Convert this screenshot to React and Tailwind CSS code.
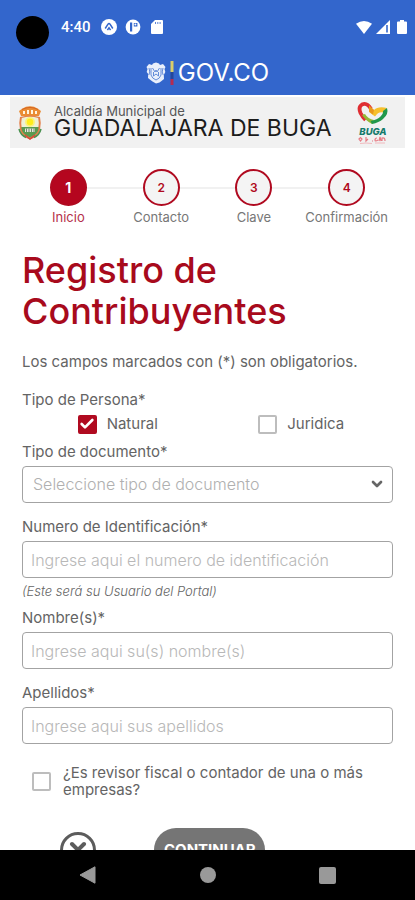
import { useState } from "react";
import { Check, ChevronDown, X } from "lucide-react";

const STEPS = ["Inicio", "Contacto", "Clave", "Confirmación"];

const DOCUMENT_TYPES = ["Cédula de ciudadanía", "Cédula de extranjería", "Pasaporte"];

/* ================= PAGE ================= */
export default function App() {
  const [persona, setPersona] = useState("natural");
  const [revisor, setRevisor] = useState(false);
  const [form, setForm] = useState({ tipo: "", numero: "", nombres: "", apellidos: "" });

  const update = (e) => setForm({ ...form, [e.target.name]: e.target.value });

  return (
    <div className="flex h-screen flex-col bg-white font-[Inter,sans-serif] text-[#646464]">
      <header className="bg-[#3366cc] text-white">
        <StatusBar />
        <div className="flex h-[41px] items-center justify-center gap-1 pb-1">
          <CoatOfArms />
          <FlagBar />
          <span className="text-2xl leading-6">GOV.CO</span>
        </div>
      </header>

      <main className="flex-1 overflow-y-auto [scrollbar-width:none]">
        <Banner />
        <Stepper current={0} />

        <form className="px-[22px]" onSubmit={(e) => e.preventDefault()}>
          <h1 className="mt-6 max-w-[300px] text-[36px] leading-[41px] font-medium text-[#a80a1c]">
            Registro de Contribuyentes
          </h1>
          <p className="mt-5 text-[15px] leading-5">
            Los campos marcados con (*) son obligatorios.
          </p>

          <fieldset className="mt-[18px]">
            <legend className="text-[15px] leading-5">Tipo de Persona*</legend>
            <div className="grid grid-cols-2 pt-1 pl-1">
              <CheckItem
                label="Natural"
                checked={persona === "natural"}
                onChange={() => setPersona("natural")}
              />
              <CheckItem
                label="Juridica"
                checked={persona === "juridica"}
                onChange={() => setPersona("juridica")}
              />
            </div>
          </fieldset>

          <div className="mt-2">
            <label htmlFor="tipo" className="block text-[15px] leading-5">
              Tipo de documento*
            </label>
            <div className="relative mt-1">
              <select
                id="tipo"
                name="tipo"
                value={form.tipo}
                onChange={update}
                className="h-[37px] w-full appearance-none rounded border border-[#a3a3a3] bg-white px-2.5 pb-0.5 text-base font-light text-[#b0b0b0]"
              >
                <option value="">Seleccione tipo de documento</option>
                {DOCUMENT_TYPES.map((type) => (
                  <option key={type}>{type}</option>
                ))}
              </select>
              <ChevronDown
                className="pointer-events-none absolute top-2.5 right-2 h-4 w-4 text-[#666]"
                strokeWidth={4}
              />
            </div>
          </div>

          <TextField
            name="numero"
            label="Numero de Identificación*"
            placeholder="Ingrese aqui el numero de identificación"
            value={form.numero}
            onChange={update}
          />
          <p className="mt-1 -mb-1.5 text-[13px] leading-[18px] font-light italic">
            (Este será su Usuario del Portal)
          </p>
          <TextField
            name="nombres"
            label="Nombre(s)*"
            placeholder="Ingrese aqui su(s) nombre(s)"
            value={form.nombres}
            onChange={update}
          />
          <TextField
            name="apellidos"
            label="Apellidos*"
            placeholder="Ingrese aqui sus apellidos"
            value={form.apellidos}
            onChange={update}
          />

          <label className="mt-5 flex items-center gap-3 px-2.5 text-[15px] leading-[17px]">
            <Checkbox checked={revisor} onChange={() => setRevisor(!revisor)} />
            ¿Es revisor fiscal o contador de una o más empresas?
          </label>

          <div className="mt-[30px] flex items-center gap-[58px] pb-6 pl-[38px]">
            <button
              type="button"
              aria-label="Cancelar"
              className="flex h-9 w-9 items-center justify-center rounded-full border-[3px] border-[#5c5c5c] text-[#5c5c5c]"
            >
              <X className="h-6 w-6" strokeWidth={4} />
            </button>
            <button
              type="submit"
              className="h-11 rounded-full bg-[#757575] px-2.5 text-[15px] font-bold text-white"
            >
              CONTINUAR
            </button>
          </div>
        </form>
      </main>

      <NavBar />
    </div>
  );
}

/* ================= STATUS BAR ================= */
function StatusBar() {
  return (
    <div className="flex h-[54px] items-center pr-2 pl-4">
      <span className="mt-2.5 h-[33px] w-[33px] rounded-full bg-black" />
      <span className="ml-3 font-[Roboto,sans-serif] text-[15px] font-medium">4:40</span>
      <svg viewBox="0 0 16 16" className="ml-2.5 h-4 w-4">
        <circle cx="8" cy="8" r="8" fill="#fff" />
        <path d="M4.2 9.5 7 5.2q1-1.4 2 0l2.8 4.3M6.4 11.2 8 8.8l1.6 2.4" fill="none" stroke="#3366cc" strokeWidth="1.5" />
      </svg>
      <svg viewBox="0 0 16 16" className="ml-2 h-4 w-4">
        <circle cx="8" cy="8" r="7.4" fill="#fff" />
        <path d="M5 3.400h2.200v9H5zM8.800 4h3.600v3.400H8.800z" fill="#3366cc" />
        <circle cx="10.400" cy="5.400" r="1" fill="#fff" />
      </svg>
      <svg viewBox="0 0 12 14" className="ml-2.5 h-3.5 w-3">
        <path d="M4 0h7q1 0 1 1v12q0 1-1 1H1q-1 0-1-1V4z" fill="#fff" />
        <path d="M4.500 2v2M6.800 2v2M9.100 2v2" stroke="#3366cc" strokeWidth=".8" />
      </svg>
      <svg viewBox="0 0 16 13" className="ml-auto h-[13px] w-4">
        <path d="M0 2.8Q8-2.8 16 2.8L8 13z" fill="#fff" />
      </svg>
      <svg viewBox="0 0 14 14" className="ml-1 h-3.5 w-3.5">
        <path d="M0 14 14 0v14z" fill="#fff" />
        <path d="M11 5v7.5" stroke="#3366cc" strokeWidth="1.6" />
      </svg>
      <svg viewBox="0 0 10 14" className="ml-[7px] h-3.5 w-2.5">
        <path d="M3 0h4v1.4h2q1 0 1 1V13q0 1-1 1H1q-1 0-1-1V2.4q0-1 1-1h2z" fill="#fff" />
      </svg>
    </div>
  );
}

/* ================= LOGOS ================= */
function CoatOfArms() {
  return (
    <svg viewBox="0 0 20 22" className="h-[22px] w-5">
      <path
        d="M7 1.5 10 .5l3 1 1 1.5 3-1 2.5 3-1 2 .8 3-1.500 3 .2 4-2.500 2-2 1.500L10 21.500 6.500 19.500l-2-1.500-2.500-2 .2-4L.7 10l.8-3-1-2L3 2l3 1z"
        fill="#e9effb"
      />
      <path
        d="M5 6v7q1 3.500 5 5 4-1.500 5-5V6M6.500 6l2.500 4 1-2 1 2 2.500-4M7.500 10v4l2.500-2 2.500 2v-4M3 6l.8 4-1 3M17 6l-.8 4 1 3"
        fill="none"
        stroke="#5580d4"
        strokeWidth=".9"
      />
    </svg>
  );
}

function FlagBar() {
  return (
    <svg viewBox="0 0 4 24" className="h-6 w-1">
      <path d="M.5 0h3v11h-3z" fill="#d9cd6a" />
      <path d="M.5 11h3v7h-3z" fill="#24479c" />
      <path d="M.5 18h3v6h-3z" fill="#b52b52" />
    </svg>
  );
}

function CityShield() {
  return (
    <svg viewBox="0 0 24 34" className="h-[34px] w-6">
      <path d="M3 10 1 5l3.500-2.500L8 .8l4-.6 4 .6 3.500 1.700L23 5l-2 5z" fill="#ea8c34" />
      <path d="M5 8V5h2v3M9 8V4h2v4M13 8V4h2v4M17 8V5h2v3" fill="#fff4df" />
      <path d="M4 3.500 8 2l4-.6L16 2l4 1.500" fill="none" stroke="#cf5b1e" strokeWidth=".8" />
      <path d="M2 11q10-3 20 0 1.500 6 0 13-2 7-10 9.500Q4 31 2 24 .5 17 2 11z" fill="#e3804a" />
      <path d="M3.800 12q8.200-2.500 16.400 0 1 4.500.2 9H3.600q-.8-4.500.2-9z" fill="#eef0d6" />
      <circle cx="12" cy="16" r="5" fill="#fbf27a" />
      <circle cx="12" cy="16" r="3.200" fill="#ffec1c" />
      <path d="M3.400 21h17.200q0 5-3.600 7.500l-5 3-5-3Q3.400 26 3.400 21z" fill="#5a9a50" />
      <path d="M7 22.500h10V26H7z" fill="#e6e6da" />
      <path d="M8.500 22.500V26M11 22.500V26M13.500 22.500V26M16 22.500V26" stroke="#5f8560" strokeWidth=".9" />
      <path d="M1 23q1.500 6 7 8.500M23 23q-1.500 6-7 8.500" fill="none" stroke="#4a9150" strokeWidth="1.500" />
      <path d="m7 29 5 4 5-4" fill="none" stroke="#d8483a" strokeWidth="1.600" />
    </svg>
  );
}

function BugaLogo() {
  return (
    <svg viewBox="0 0 32 44" className="h-11 w-8" role="img" aria-label="Buga">
      <path d="M14 8Q10 1 5 3.500 1 6 3.500 12q2 4 5 7" fill="none" stroke="#df2d32" strokeWidth="3.800" />
      <path d="M5 14q4 6 10 9l2-4q-6-1-9-6z" fill="#93b833" />
      <path d="M12 4.500 17 9q4-4 13-2l-3.500 4.500q-5-1.500-8.500 4L12 11z" fill="#f6c02c" />
      <path d="m12 4.500 5 4.500-1 4.500-4-3z" fill="#e8961d" />
      <path d="M30 7q2 6-4 11-4 3.500-11 5l-1.500-3q7-1.500 10-4.500 3-3 2.500-5.500z" fill="#21984b" />
      <text x="16" y="33.500" textAnchor="middle" fontFamily="Inter, sans-serif" fontSize="9.500" fontWeight="800" fontStyle="italic" fill="#157a6b">
        BUGA
      </text>
      <path d="m2 38 1.500-1.500L5 38l-1.500 2zM9 36v4l2-2M15 40h1M20 37q-2 0-2 2t3 0M22 40l1-4 1 4M25 40v-3q3-1 3 3" fill="none" stroke="#e77983" strokeWidth="1.200" />
      <path d="M3 42.500q6-1 12 0M18 42h10" fill="none" stroke="#f0a2a7" strokeWidth=".7" />
    </svg>
  );
}

/* ================= BANNER ================= */
function Banner() {
  return (
    <div className="mx-2.5 mt-0.5 flex h-[51px] items-center bg-[#f1f1f1] pr-4 pl-2">
      <CityShield />
      <div className="ml-3 pb-1 whitespace-nowrap text-[#1c1c1c]">
        <p className="text-[13px] leading-[14px] text-[#555]">Alcaldía Municipal de</p>
        <p className="text-[23px] leading-5">GUADALAJARA DE BUGA</p>
      </div>
      <div className="ml-auto">
        <BugaLogo />
      </div>
    </div>
  );
}

/* ================= STEPPER ================= */
function Stepper({ current }) {
  return (
    <ol className="mt-[21px] grid grid-cols-4 px-[22px]">
      {STEPS.map((step, i) => (
        <li key={step} className="flex flex-col items-center">
          <div className="flex w-full items-center">
            <span className={`h-0.5 flex-1 ${i === 0 ? "" : "bg-[#f1f1f1]"}`} />
            <span
              className={`flex h-[37px] w-[37px] items-center justify-center rounded-full border-2 border-[#b00a20] ${
                i === current
                  ? "bg-[#b5061f] text-sm font-bold text-white"
                  : "bg-[#f4f4f4] text-xs font-semibold text-[#b00a20]"
              }`}
            >
              {i + 1}
            </span>
            <span className={`h-0.5 flex-1 ${i === STEPS.length - 1 ? "" : "bg-[#f1f1f1]"}`} />
          </div>
          <span
            className={`mt-0.5 text-[13px] leading-[18px] ${
              i === current ? "text-[#b5304a]" : "text-[#777]"
            }`}
          >
            {step}
          </span>
        </li>
      ))}
    </ol>
  );
}

/* ================= FORM CONTROLS ================= */
function TextField({ name, label, placeholder, value, onChange }) {
  return (
    <div className="mt-3.5">
      <label htmlFor={name} className="block text-[15px] leading-5">
        {label}
      </label>
      <input
        id={name}
        name={name}
        type="text"
        value={value}
        onChange={onChange}
        placeholder={placeholder}
        className="mt-1 block h-[37px] w-full rounded border border-[#a3a3a3] px-2 text-base font-light placeholder:text-[#b8b8b8]"
      />
    </div>
  );
}

function Checkbox({ checked, onChange }) {
  return (
    <span className="relative h-[19px] w-[19px] shrink-0">
      <input
        type="checkbox"
        checked={checked}
        onChange={onChange}
        className="block h-[19px] w-[19px] appearance-none rounded-xs border-2 border-[#bdbdbd] bg-white checked:border-[#b00a20] checked:bg-[#b00a20]"
      />
      {checked && (
        <Check
          className="pointer-events-none absolute inset-0 m-auto h-4 w-4 text-white"
          strokeWidth={4}
        />
      )}
    </span>
  );
}

function CheckItem({ label, checked, onChange }) {
  return (
    <label className="flex items-center justify-center gap-2.5 text-[15px] leading-5">
      <Checkbox checked={checked} onChange={onChange} />
      {label}
    </label>
  );
}

/* ================= ANDROID NAV ================= */
function NavBar() {
  return (
    <nav className="flex h-[50px] shrink-0 items-center justify-around bg-black px-7">
      <button type="button" aria-label="Atrás">
        <svg viewBox="0 0 18 18" className="h-[18px] w-[18px]">
          <path d="M1 9 16 .8v16.400z" fill="#999" stroke="#999" strokeLinejoin="round" />
        </svg>
      </button>
      <button type="button" aria-label="Inicio" className="h-4 w-4 rounded-full bg-[#999]" />
      <button type="button" aria-label="Recientes" className="h-[17px] w-[17px] rounded-xs bg-[#999]" />
    </nav>
  );
}
